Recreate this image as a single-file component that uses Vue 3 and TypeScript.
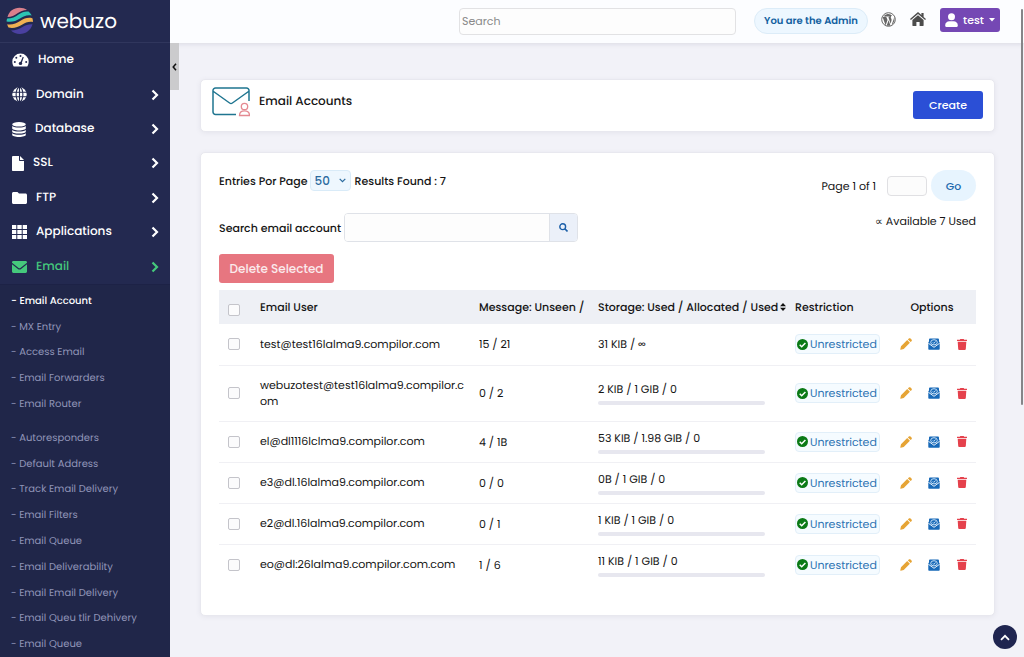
<script setup lang="ts">
import { ref } from 'vue'

interface MenuItem {
  label: string
  icon: string
  width: number
  expandable: boolean
  active?: boolean
}

interface Account {
  user: string
  messages: string
  storage: string
  hasBar: boolean
}

const menu: MenuItem[] = [
  { label: 'Home', icon: 'gauge', width: 17, expandable: false },
  { label: 'Domain', icon: 'globe', width: 15, expandable: true },
  { label: 'Database', icon: 'database', width: 14, expandable: true },
  { label: 'SSL', icon: 'file', width: 12, expandable: true },
  { label: 'FTP', icon: 'folder', width: 15, expandable: true },
  { label: 'Applications', icon: 'grid', width: 15, expandable: true },
  { label: 'Email', icon: 'mail', width: 15, expandable: true, active: true },
]

const submenus: string[][] = [
  ['Email Account', 'MX Entry', 'Access Email', 'Email Forwarders', 'Email Router'],
  [
    'Autoresponders',
    'Default Address',
    'Track Email Delivery',
    'Email Filters',
    'Email Queue',
    'Email Deliverability',
    'Email Email Delivery',
    'Email Queu tlir Dehivery',
    'Email Queue',
  ],
]

const accounts: Account[] = [
  { user: 'test@test16lalma9.compilor.com', messages: '15 / 21', storage: '31 KIB / ∞', hasBar: false },
  { user: 'webuzotest@test16lalma9.compilor.com', messages: '0 / 2', storage: '2 KIB / 1 GIB / 0', hasBar: true },
  { user: 'el@dl1116lclma9.compilor.com', messages: '4 / 1B', storage: '53 KIB / 1.98 GIB / 0', hasBar: true },
  { user: 'e3@dl.16lalma9.compilor.com', messages: '0 / 0', storage: '0B / 1 GIB / 0', hasBar: true },
  { user: 'e2@dl.16lalma9.compilor.com', messages: '0 / 1', storage: '1 KIB / 1 GIB / 0', hasBar: true },
  { user: 'eo@dl:26lalma9.compilor.com.com', messages: '1 / 6', storage: '11 KIB / 1 GIB / 0', hasBar: true },
]

const perPage = ref('50')
const query = ref('')
const accountQuery = ref('')
const page = ref('')
</script>

<template>
  <div class="layout">
    <aside class="sidebar">
      <a class="brand" href="#">
        <svg class="brand-mark" viewBox="0 0 28 28" aria-hidden="true">
          <path d="M1.500 10C3 4.500 7.500.8 13.500.8c3 0 5.500.8 7.500 2.200-4 0-6.500 1.300-9.500 3.300C8.500 8.500 5.500 10 1.500 10z" fill="#d9808c" />
          <path d="M.6 14.500c0-1.500.3-2.300.7-3C6 11.500 9 10 12.500 7.500c3.500-2.300 6.500-3.500 10-3 1.500 1.200 2.500 2.500 3.200 4-4.700-1-8 .5-11.700 3-4 2.600-8.500 4-13.400 3z" fill="#2bc4b4" />
          <path d="M2.500 20.500c-.6-1-1-2-1.300-3.200 4.800.7 9.300-.8 13.300-3.500 3.800-2.500 7.500-3.800 11.900-2.600.5 1.300.6 2.600.5 3.800-4-.8-7.300.4-10.900 2.700-4 2.500-8.700 4-13.500 2.800z" fill="#efb052" />
          <path d="M5 23.500c4.300 0 8-1.300 11.500-3.500 3.300-2 6.500-3 10-2.700C25 23 20 27 13.800 27c-3.500 0-6.500-1.300-8.800-3.500z" fill="#4a40a0" />
        </svg>
        <span>webuzo</span>
      </a>

      <nav class="menu" aria-label="Main">
        <a v-for="item in menu" :key="item.label" href="#" class="menu-item" :class="{ active: item.active }">
          <svg v-if="item.icon === 'gauge'" :width="item.width" height="14" viewBox="0 0 17 14" aria-hidden="true">
            <path d="M8.500 .5A8.200 8.200 0 0 0 .3 8.700c0 1.600.4 3 1.100 4.200.2.400.5.600.9.600h12.400c.4 0 .7-.2.900-.6.700-1.200 1.100-2.600 1.100-4.200A8.200 8.200 0 0 0 8.500.5z" fill="currentColor" />
            <g fill="#232950">
              <circle cx="8.500" cy="3" r="1" /><circle cx="4.300" cy="4.700" r="1" /><circle cx="2.800" cy="8.900" r="1" /><circle cx="14.200" cy="8.900" r="1" /><circle cx="8.500" cy="10.400" r="1.700" />
              <path d="M8.200 10l2.500-6.200 1.100.4L9.500 10.500z" />
            </g>
          </svg>
          <svg v-else-if="item.icon === 'globe'" :width="item.width" height="15" viewBox="0 0 15 15" aria-hidden="true">
            <circle cx="7.500" cy="7.500" r="7.200" fill="currentColor" />
            <g fill="none" stroke="#232950" stroke-width="1.100">
              <ellipse cx="7.500" cy="7.500" rx="3.400" ry="7.300" /><path d="M0 5.200h15M0 9.800h15M7.500 0v15" />
            </g>
          </svg>
          <svg v-else-if="item.icon === 'database'" :width="item.width" height="15" viewBox="0 0 14 15" aria-hidden="true">
            <g fill="currentColor">
              <ellipse cx="7" cy="2.300" rx="6.800" ry="2.300" />
              <path d="M.2 4.100c1.400 1.200 4 1.500 6.800 1.500s5.400-.3 6.800-1.500v2.200C13.800 7.600 10.800 8.500 7 8.500S.2 7.600.2 6.300z" />
              <path d="M.2 8.100c1.400 1.200 4 1.500 6.800 1.500s5.400-.3 6.800-1.500v1.300c0 1.300-3 2.200-6.800 2.200S.2 10.700.2 9.400z" />
              <path d="M.2 11.200c1.400 1.200 4 1.500 6.800 1.500s5.400-.3 6.800-1.500v1.500c0 1.300-3 2.200-6.800 2.200s-6.800-.9-6.800-2.200z" />
            </g>
          </svg>
          <svg v-else-if="item.icon === 'file'" :width="item.width" height="15" viewBox="0 0 12 15" aria-hidden="true">
            <path d="M1.200 0H7v4.200c0 .5.300.8.800.8H12v9c0 .6-.5 1-1 1H1c-.6 0-1-.4-1-1V1.200C0 .5.500 0 1.200 0zM8 0l4 4H8z" fill="currentColor" />
          </svg>
          <svg v-else-if="item.icon === 'folder'" :width="item.width" height="12" viewBox="0 0 15 12" aria-hidden="true">
            <path d="M1.500 0h4L7 1.600h6.500c.8 0 1.500.6 1.500 1.500v7.400c0 .8-.7 1.500-1.500 1.500h-12C.7 12 0 11.300 0 10.500v-9C0 .7.700 0 1.500 0z" fill="currentColor" />
          </svg>
          <svg v-else-if="item.icon === 'grid'" :width="item.width" height="14" viewBox="0 0 15 14" aria-hidden="true">
            <path d="M0 0h4.300v4H0zM5.300 0h4.400v4H5.300zM10.700 0H15v4h-4.300zM0 5h4.300v4H0zM5.300 5h4.400v4H5.300zM10.700 5H15v4h-4.300zM0 10h4.300v4H0zM5.300 10h4.400v4H5.300zM10.700 10H15v4h-4.300z" fill="currentColor" />
          </svg>
          <svg v-else :width="item.width" height="12" viewBox="0 0 15 12" aria-hidden="true">
            <path d="M1.400 0h12.200C14.400 0 15 .6 15 1.400v.4L8.400 6.900c-.5.4-1.300.4-1.800 0L0 1.800v-.4C0 .6.600 0 1.400 0zM0 3.300l5.900 4.600c.9.700 2.300.7 3.200 0L15 3.300v7.300c0 .8-.6 1.400-1.400 1.400H1.400C.6 12 0 11.400 0 10.600z" fill="currentColor" />
          </svg>
          <span class="menu-label">{{ item.label }}</span>
          <svg v-if="item.expandable" class="menu-arrow" width="8" height="12" viewBox="0 0 8 12" aria-hidden="true">
            <path d="M1.500 1.500L6 6l-4.500 4.500" fill="none" stroke="currentColor" stroke-width="2.200" />
          </svg>
        </a>
      </nav>

      <div class="submenu">
        <ul v-for="(group, g) in submenus" :key="g">
          <li v-for="(entry, i) in group" :key="i">
            <a href="#" :class="{ current: g === 0 && i === 0 }">- {{ entry }}</a>
          </li>
        </ul>
      </div>

      <button class="collapse" type="button" aria-label="Collapse sidebar">
        <svg width="5" height="8" viewBox="0 0 5 8" aria-hidden="true">
          <path d="M4 .8L1.200 4 4 7.200" fill="none" stroke="#111" stroke-width="1.500" />
        </svg>
      </button>
    </aside>

    <div class="page">
      <header class="topbar">
        <input v-model="query" class="global-search" type="search" placeholder="Search" aria-label="Search" />
        <span class="role">You are the Admin</span>
        <a href="#" class="top-icon" aria-label="WordPress">
          <svg width="15" height="15" viewBox="0 0 15 15" aria-hidden="true">
            <circle cx="7.500" cy="7.500" r="6.800" fill="#fff" stroke="#666" stroke-width="1" />
            <path d="M1.600 5.100l3 8.300 1.900-5.500-1-2.700-.8-.1v-.6h3.700v.6l-1 .1 2.200 6.500.9-3.200c.4-1.400-.6-2.200-.7-3.300 0-.8.600-1.500 1.500-1.500A6 6 0 0 0 2.400 4.500h2v.6zM7.600 8.300l-1.900 5.300c1.200.3 2.500.3 3.700-.1zM13 4.700c.2 1.400-.3 2.300-.7 3.500l-1.700 4.500c2.600-1.600 3.600-5 2.400-8z" fill="#666" />
          </svg>
        </a>
        <a href="#" class="top-icon" aria-label="Home">
          <svg width="16" height="14" viewBox="0 0 16 14" aria-hidden="true">
            <path d="M8 0l3.400 3V1h2.200v4L16 7.100l-.9 1L8 1.900.9 8.100 0 7.100zM8 3.200l5.600 4.900v5.400c0 .3-.2.500-.5.500H9.600v-4H6.400v4H2.900c-.3 0-.5-.2-.5-.5V8.100z" fill="#4c4c4c" />
          </svg>
        </a>
        <button class="user" type="button">
          <svg width="13" height="14" viewBox="0 0 13 14" aria-hidden="true">
            <circle cx="6.500" cy="3.700" r="3.500" fill="#fff" />
            <path d="M4.400 8.300h4.200c2.400 0 4.200 1.700 4.200 3.900v.6c0 .7-.4 1.200-1.100 1.200H1.300C.6 14 .2 13.500.2 12.800v-.6c0-2.200 1.800-3.900 4.200-3.900z" fill="#fff" />
          </svg>
          <span>test</span>
          <svg class="caret" width="6" height="4" viewBox="0 0 6 4" aria-hidden="true"><path d="M0 0h6L3 3.500z" fill="#fff" /></svg>
        </button>
      </header>

      <main class="content">
        <section class="card title-card">
          <div class="title">
            <svg width="38" height="30" viewBox="0 0 38 30" fill="none" aria-hidden="true">
              <path d="M24 27.500H3.500a2.500 2.500 0 0 1-2.500-2.500V3.500A2.500 2.500 0 0 1 3.500 1h31A2.500 2.500 0 0 1 37 3.500V14M1.500 4.500L17.600 16c.9.600 1.900.6 2.800 0L36.500 4.500" stroke="#1f7590" stroke-width="1.500" />
              <circle cx="32.500" cy="19.500" r="3.200" stroke="#e48a92" stroke-width="1.300" />
              <path d="M27.500 28.500c0-3 2-4.600 5-4.600s5 1.600 5 4.600z" stroke="#e48a92" stroke-width="1.300" />
            </svg>
            <h1>Email Accounts</h1>
          </div>
          <button class="create" type="button">Create</button>
        </section>

        <section class="card list-card">
          <div class="tools">
            <div class="tools-left">
              <div class="entries">
                <label for="per-page">Entries Por Page</label>
                <span class="select-wrap">
                  <select id="per-page" v-model="perPage">
                    <option>50</option>
                    <option>100</option>
                  </select>
                  <svg width="7" height="5" viewBox="0 0 7 5" aria-hidden="true">
                    <path d="M.7.900l2.800 2.800L6.300.900" fill="none" stroke="#2a6a9e" stroke-width="1.200" />
                  </svg>
                </span>
                <span class="found">Results Found : 7</span>
              </div>
              <form class="account-search" @submit.prevent>
                <label for="account-search">Search email account</label>
                <div class="group">
                  <input id="account-search" v-model="accountQuery" type="text" />
                  <button type="submit" aria-label="Search email account">
                    <svg width="9" height="9" viewBox="0 0 9 9" fill="none" stroke="#1c5fa8" aria-hidden="true">
                      <circle cx="3.700" cy="3.700" r="2.900" stroke-width="1.400" />
                      <path d="M5.800 5.800l2.700 2.700" stroke-width="1.600" />
                    </svg>
                  </button>
                </div>
              </form>
              <button class="delete" type="button">Delete Selected</button>
            </div>

            <div class="tools-right">
              <form class="pager" @submit.prevent>
                <label for="page-no">Page 1 of 1</label>
                <input id="page-no" v-model="page" type="text" />
                <button type="submit">Go</button>
              </form>
              <p>∝ Available 7 Used</p>
            </div>
          </div>

          <table>
            <colgroup>
              <col class="c-check" /><col class="c-user" /><col class="c-message" />
              <col class="c-storage" /><col class="c-restriction" /><col class="c-options" />
            </colgroup>
            <thead>
              <tr>
                <th class="check"><input type="checkbox" aria-label="Select all accounts" /></th>
                <th>Email User</th>
                <th>Message: Unseen /</th>
                <th>
                  <span class="sortable">Storage: Used / Allocated / Used
                    <svg width="6" height="8" viewBox="0 0 6 8" aria-hidden="true"><path d="M3 0l3 3.300H0zM3 8l3-3.300H0z" fill="#111" /></svg>
                  </span>
                </th>
                <th>Restriction</th>
                <th class="options-head">Options</th>
              </tr>
            </thead>
            <tbody>
              <tr v-for="account in accounts" :key="account.user">
                <td class="check"><input type="checkbox" :aria-label="'Select ' + account.user" /></td>
                <td class="address">{{ account.user }}</td>
                <td>{{ account.messages }}</td>
                <td>
                  <span class="usage">{{ account.storage }}</span>
                  <div v-if="account.hasBar" class="bar"></div>
                </td>
                <td>
                  <span class="badge">
                    <svg width="11" height="11" viewBox="0 0 11 11" aria-hidden="true">
                      <circle cx="5.500" cy="5.500" r="5.500" fill="#0b7a16" />
                      <path d="M2.700 5.700l2 2 3.700-3.800" fill="none" stroke="#fff" stroke-width="1.500" />
                    </svg>
                    Unrestricted
                  </span>
                </td>
                <td class="options">
                  <div class="actions">
                    <button type="button" aria-label="Edit">
                      <svg width="12" height="12" viewBox="0 0 12 12" aria-hidden="true">
                        <path d="M7.200 2.100l2.700 2.700-6.200 6.200-3 .7c-.3.100-.5-.1-.4-.4l.7-3zM7.900 1.400l.9-.9c.5-.5 1.200-.5 1.700 0l1 1c.5.500.5 1.200 0 1.700l-.9.900z" fill="#e6a435" />
                      </svg>
                    </button>
                    <button type="button" aria-label="Webmail">
                      <svg width="12" height="12" viewBox="0 0 12 12" aria-hidden="true">
                        <path d="M2.300.500h7.400c.8 0 1.300.5 1.300 1.200v1.800l.7.800v6.500c0 .6-.4 1-1 1H1.300c-.6 0-1-.4-1-1V4.300L1 3.500V1.700C1 1 1.500.500 2.300.500z" fill="#1769b8" />
                        <path d="M.3 5.200L6 9.300l5.700-4.100" fill="none" stroke="#fff" stroke-width=".9" />
                        <ellipse cx="6" cy="4.300" rx="3.300" ry="2.600" fill="none" stroke="#d7eafa" stroke-width=".9" />
                        <path d="M4.800 4.400l1 1 1.700-1.900" fill="none" stroke="#d7eafa" stroke-width=".9" />
                      </svg>
                    </button>
                    <button type="button" aria-label="Delete">
                      <svg width="10" height="11" viewBox="0 0 10 11" aria-hidden="true">
                        <path d="M3.300 0h3.400l.5.700H10V2H0V.7h2.800zM.7 2.700h8.600l-.5 7.400c0 .5-.4.900-.9.900H2.100c-.5 0-.9-.4-.9-.9z" fill="#e5414c" />
                      </svg>
                    </button>
                  </div>
                </td>
              </tr>
            </tbody>
          </table>
        </section>
      </main>
    </div>

    <div class="scroll-thumb" aria-hidden="true"></div>
    <button class="to-top" type="button" aria-label="Back to top">
      <svg width="10" height="7" viewBox="0 0 10 7" aria-hidden="true">
        <path d="M1 5.800l4-4 4 4" fill="none" stroke="#fff" stroke-width="1.800" />
      </svg>
    </button>
  </div>
</template>

<style>
body {
  background: #f2f2f8;
}
</style>

<style scoped>
.layout,
.layout * {
  box-sizing: border-box;
}

.layout {
  position: relative;
  display: flex;
  min-height: 100vh;
  font-family: Poppins, Inter, "Liberation Sans", sans-serif;
  font-size: 11px;
  line-height: 16px;
  text-rendering: geometricPrecision;
  color: #151515;
  background: #f2f2f8;
}

button,
input,
select {
  font: inherit;
  color: inherit;
  margin: 0;
}

button {
  padding: 0;
  border: 0;
  cursor: pointer;
}

a {
  color: inherit;
  text-decoration: none;
}

svg {
  flex: none;
}

.sidebar {
  position: relative;
  flex: none;
  width: 170px;
  background: #232950;
  color: #fff;
}

.brand {
  display: flex;
  align-items: center;
  gap: 6px;
  height: 43px;
  padding-left: 6px;
  border-bottom: 1px solid #30365d;
  font-size: 20px;
  line-height: 24px;
}

.brand-mark {
  width: 28px;
  height: 28px;
}

.menu {
  display: flex;
  flex-direction: column;
  height: 241px;
}

.menu-item {
  flex: 1;
  display: flex;
  align-items: center;
  gap: 9px;
  padding: 0 11px 0 12px;
  font-size: 12px;
  font-weight: 500;
}

.menu-item.active {
  color: #45c97c;
}

.menu-label {
  flex: 1;
}

.submenu {
  padding: 3px 0 0 11px;
  border-top: 1px solid #1d2246;
  background: #202649;
  font-size: 10px;
  color: #9095b8;
}

.submenu ul {
  display: grid;
  grid-auto-rows: 1fr;
  height: 129px;
  margin: 0;
  padding: 0;
  list-style: none;
}

.submenu ul + ul {
  height: 232px;
  margin-top: 8px;
}

.submenu li {
  display: flex;
  align-items: center;
}

.submenu .current {
  font-weight: 500;
  color: #fff;
}

.collapse {
  position: absolute;
  top: 43px;
  left: 100%;
  display: flex;
  align-items: center;
  justify-content: center;
  width: 9px;
  height: 47px;
  background: #cbcbcd;
}

.page {
  flex: 1;
  min-width: 0;
}

.topbar {
  display: flex;
  align-items: flex-start;
  justify-content: flex-end;
  height: 43px;
  padding: 8px 24px 0;
  background: #fcfdff;
  box-shadow: 0 1px 5px #d9d9e2;
}

.global-search {
  width: 277px;
  height: 27px;
  margin-right: 18px;
  padding: 0 2px;
  border: 1px solid #e2e2e4;
  border-radius: 4px;
  background: #fdfdfd;
  appearance: none;
}

.global-search::placeholder {
  color: #8a8a8a;
}

.role {
  width: 114px;
  margin-right: 13px;
  border: 1px solid #dcecf8;
  border-radius: 13px;
  background: #edf7ff;
  color: #1260a0;
  font-size: 10px;
  font-weight: 600;
  line-height: 24px;
  text-align: center;
}

.top-icon {
  display: flex;
  align-items: center;
  height: 22px;
  margin-right: 14px;
}

.user {
  display: flex;
  align-items: center;
  justify-content: center;
  gap: 5px;
  width: 60px;
  height: 24px;
  border-radius: 3px;
  background: #7548b4;
  color: #fff;
  font-weight: 500;
}

.content {
  display: flex;
  flex-direction: column;
  gap: 20px;
  padding: 36px 29px 42px 30px;
}

.card {
  border: 1px solid #e8e8ef;
  border-radius: 5px;
  background: #fff;
  box-shadow: 0 1px 5px #e4e4ec;
}

.title-card {
  display: flex;
  justify-content: space-between;
  align-items: flex-end;
  height: 53px;
  padding: 0 11px 12px;
}

.title {
  display: flex;
  align-items: center;
  align-self: flex-start;
  gap: 9px;
  padding-top: 7px;
}

h1 {
  margin: 0;
  font-size: 12px;
  font-weight: 500;
}

.create {
  width: 70px;
  height: 28px;
  border-radius: 3px;
  background: #2b4fd6;
  color: #fff;
  font-weight: 500;
}

.list-card {
  padding: 17px 18px 30px;
}

.tools {
  display: flex;
  justify-content: space-between;
  margin-bottom: 7px;
}

.entries,
.account-search {
  display: flex;
  align-items: center;
  font-weight: 500;
}

.entries {
  gap: 2px;
  height: 21px;
  margin-bottom: 22px;
}

.found {
  margin-left: 2px;
}

.select-wrap {
  position: relative;
  display: flex;
}

.select-wrap svg {
  position: absolute;
  right: 5px;
  top: 8px;
  pointer-events: none;
}

.entries select {
  width: 41px;
  height: 21px;
  padding: 0 4px;
  border: 1px solid #d9ebf8;
  border-radius: 4px;
  background: #eef7fe;
  color: #2a6a9e;
  font-size: 12px;
  font-weight: 500;
  appearance: none;
}

.account-search {
  gap: 3px;
  margin-bottom: 12px;
}

.group {
  display: flex;
  width: 234px;
  height: 29px;
  border: 1px solid #dfe2e8;
  border-radius: 4px;
  overflow: hidden;
}

.group input {
  flex: 1;
  min-width: 0;
  padding: 0 8px;
  border: 0;
  background: #fdfdfd;
}

.group button {
  display: flex;
  align-items: center;
  justify-content: center;
  width: 28px;
  border-left: 1px solid #dfe2e8;
  background: #ebf0f9;
}

.delete {
  width: 115px;
  height: 29px;
  border-radius: 3px;
  background: #e77680;
  color: #fbeaec;
  font-size: 12px;
  font-weight: 500;
}

.pager {
  display: flex;
  align-items: center;
  justify-content: flex-end;
  gap: 4px;
  height: 31px;
}

.pager label {
  margin-right: 7px;
}

.pager input {
  width: 40px;
  height: 20px;
  padding: 0 4px;
  border: 1px solid #e0e0e3;
  border-radius: 4px;
  background: #fcfcfc;
}

.pager button {
  width: 45px;
  height: 31px;
  border-radius: 16px;
  background: #e7f4fe;
  color: #2169ae;
  font-weight: 500;
}

.tools-right p {
  margin: 12px 0 0;
  text-align: right;
}

table {
  width: 100%;
  border-collapse: collapse;
  table-layout: fixed;
}

.c-check { width: 31px; }
.c-message { width: 119px; }
.c-storage { width: 197px; }
.c-restriction { width: 107px; }
.c-options { width: 84px; }

th {
  height: 34px;
  padding: 0 0 0 10px;
  background: #eef0f5;
  font-weight: 500;
  text-align: left;
  white-space: nowrap;
}

td {
  height: 41px;
  padding: 0 0 0 10px;
  border-bottom: 1px solid #f0f0f4;
}

tbody tr:last-child td {
  border-bottom: 0;
}

.address {
  padding: 11px 2px 12px 10px;
  word-break: break-all;
}

.check {
  padding: 0 0 0 9px;
}

th.check {
  padding-top: 6px;
}

.check input {
  display: block;
  width: 12px;
  height: 12px;
  border: 1px solid #c4c4ca;
  border-radius: 2px;
  background: #fbfbfc;
  appearance: none;
}

.check input:checked {
  background: #2b4fd6;
}

.sortable {
  display: inline-flex;
  align-items: center;
  gap: 2px;
}

.usage {
  display: block;
}

.bar {
  width: 167px;
  height: 4px;
  margin-top: 4px;
  border-radius: 2px;
  background: #e7e7ef;
}

.badge {
  display: inline-flex;
  align-items: center;
  gap: 2px;
  height: 20px;
  padding: 0 2px 0 1px;
  border: 1px solid #e2eff9;
  border-radius: 4px;
  background: #f5fbff;
  color: #2c73b3;
}

th.options-head {
  padding: 0 4px 0 0;
  text-align: center;
}

.options {
  padding: 0;
}

.actions {
  display: flex;
}

.actions button {
  display: flex;
  align-items: center;
  justify-content: center;
  width: 28px;
  height: 20px;
  background: none;
}

.scroll-thumb {
  position: absolute;
  top: 9px;
  right: 1px;
  width: 2px;
  height: 396px;
  border-radius: 1px;
  background: #858588;
}

.to-top {
  position: fixed;
  right: 7px;
  bottom: 8px;
  display: flex;
  align-items: center;
  justify-content: center;
  width: 24px;
  height: 24px;
  border-radius: 50%;
  background: #1f2550;
}
</style>
